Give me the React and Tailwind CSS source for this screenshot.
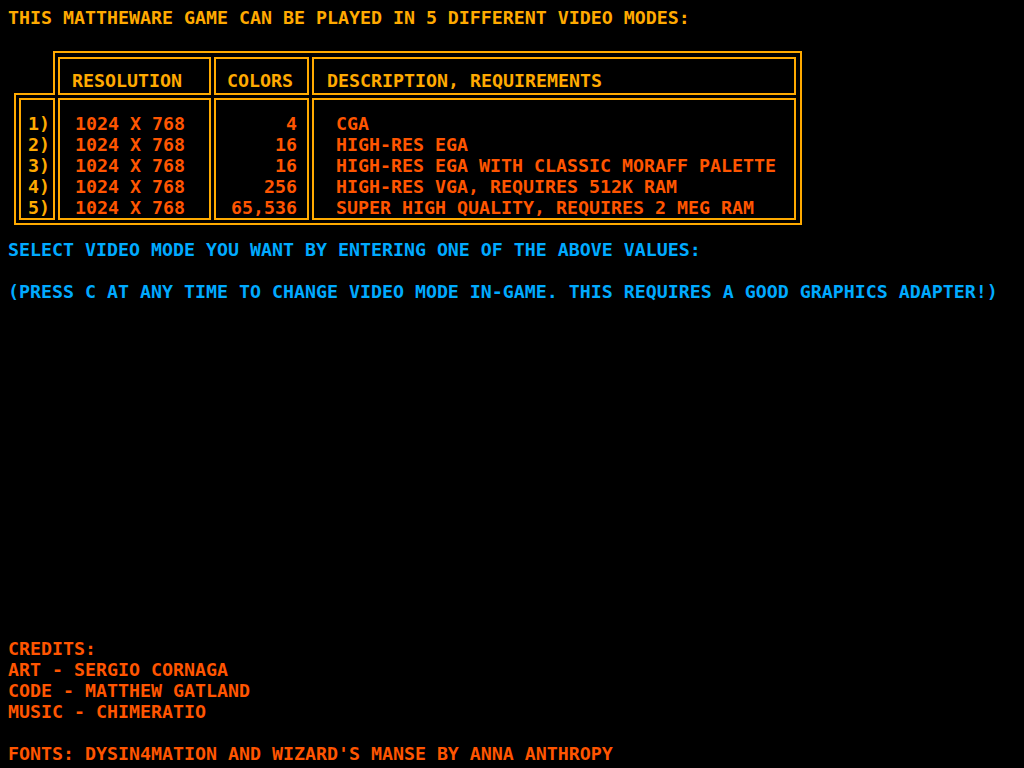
const modes = [
  { n: '1)', res: '1024 X 768', colors: '4', desc: 'CGA' },
  { n: '2)', res: '1024 X 768', colors: '16', desc: 'HIGH-RES EGA' },
  { n: '3)', res: '1024 X 768', colors: '16', desc: 'HIGH-RES EGA WITH CLASSIC MORAFF PALETTE' },
  { n: '4)', res: '1024 X 768', colors: '256', desc: 'HIGH-RES VGA, REQUIRES 512K RAM' },
  { n: '5)', res: '1024 X 768', colors: '65,536', desc: 'SUPER HIGH QUALITY, REQUIRES 2 MEG RAM' },
];

const credits = [
  'CREDITS:',
  'ART - SERGIO CORNAGA',
  'CODE - MATTHEW GATLAND',
  'MUSIC - CHIMERATIO',
];

export default function App() {
  return (
    <div className="h-[768px] w-[1024px] overflow-hidden bg-black flex flex-col pt-[7px] pb-[4px] pl-[8px] font-['DejaVu_Sans_Mono',monospace] font-bold text-[18.27px] leading-[21px] whitespace-nowrap">
      <p className="text-[#ffaa00]">THIS MATTHEWARE GAME CAN BE PLAYED IN 5 DIFFERENT VIDEO MODES:</p>

      {/* mode table */}
      <div className="mt-[23px] ml-[6px] w-[788px]">
        <div className="flex">
          <div className="w-[39px] border-b-2 border-[#ffaa00]" />
          <div className="flex flex-1 gap-[3px] border-2 border-b-0 border-[#ffaa00] pt-[4px] pl-[3px] pr-[4px] text-[#ffaa00]">
            <div className="w-[153px] h-[38px] border-2 border-[#ffaa00] pt-[11px] pl-[12px]">RESOLUTION</div>
            <div className="w-[95px] h-[38px] border-2 border-[#ffaa00] pt-[11px] pl-[11px]">COLORS</div>
            <div className="w-[484px] h-[38px] border-2 border-[#ffaa00] pt-[11px] pl-[13px]">DESCRIPTION, REQUIREMENTS</div>
          </div>
        </div>
        <div className="flex gap-[3px] border-2 border-t-0 border-[#ffaa00] pt-[3px] pb-[3px] pl-[3px] pr-[4px]">
          <div className="w-[36px] h-[122px] border-2 border-[#ffaa00] pt-[13px] pl-[7px] text-[#ffaa00]">
            {modes.map((m) => (
              <div key={m.n}>{m.n}</div>
            ))}
          </div>
          <div className="w-[153px] h-[122px] border-2 border-[#ffaa00] pt-[13px] pl-[15px] text-[#ff5500]">
            {modes.map((m) => (
              <div key={m.n}>{m.res}</div>
            ))}
          </div>
          <div className="w-[95px] h-[122px] border-2 border-[#ffaa00] pt-[13px] pr-[10px] text-right text-[#ff5500]">
            {modes.map((m) => (
              <div key={m.n}>{m.colors}</div>
            ))}
          </div>
          <div className="w-[484px] h-[122px] border-2 border-[#ffaa00] pt-[13px] pl-[22px] text-[#ff5500]">
            {modes.map((m) => (
              <div key={m.n}>{m.desc}</div>
            ))}
          </div>
        </div>
      </div>

      <p className="mt-[14px] text-[#00aaff]">SELECT VIDEO MODE YOU WANT BY ENTERING ONE OF THE ABOVE VALUES:</p>
      <p className="mt-[21px] text-[#00aaff]">(PRESS C AT ANY TIME TO CHANGE VIDEO MODE IN-GAME. THIS REQUIRES A GOOD GRAPHICS ADAPTER!)</p>

      <div className="mt-auto text-[#ff5500]">
        {credits.map((c) => (
          <p key={c}>{c}</p>
        ))}
        <p className="mt-[21px]">FONTS: DYSIN4MATION AND WIZARD'S MANSE BY ANNA ANTHROPY</p>
      </div>
    </div>
  );
}
